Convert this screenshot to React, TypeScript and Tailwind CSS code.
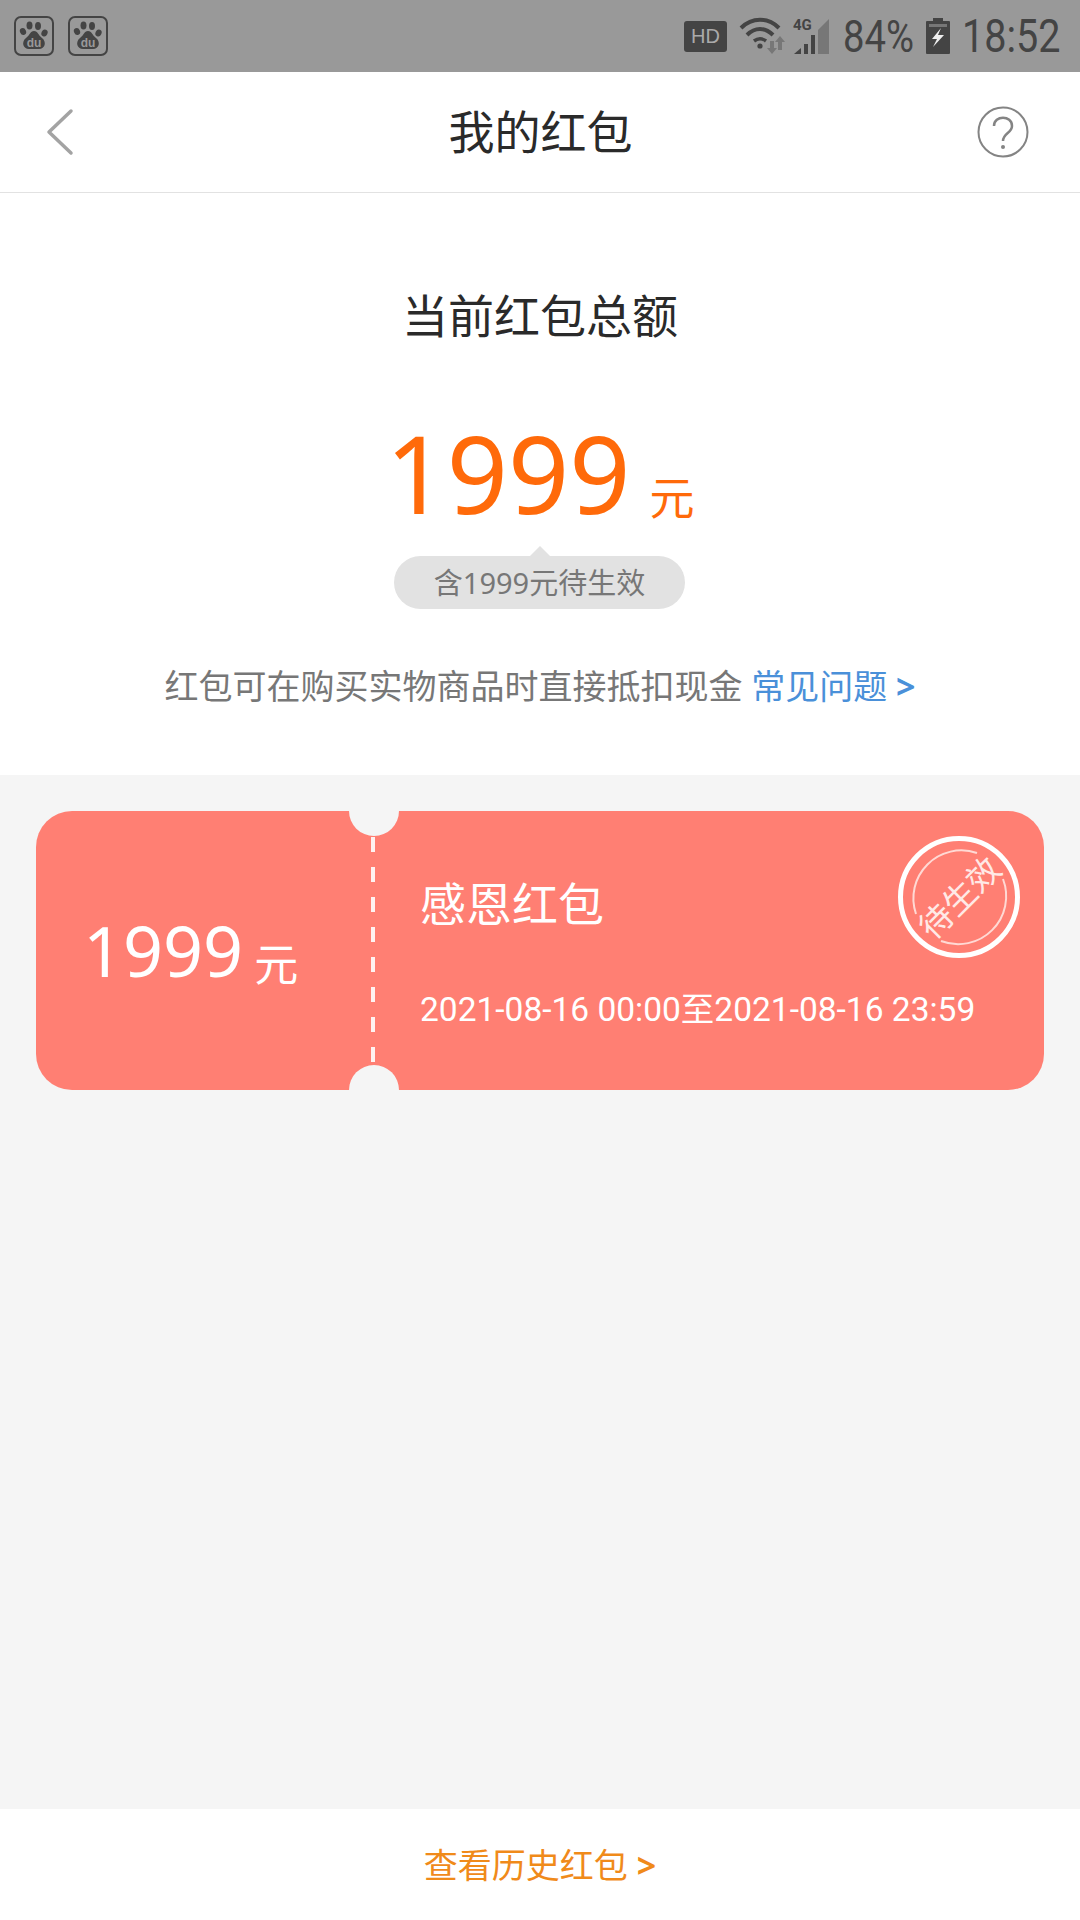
const cjk = "font-['Noto_Sans','Noto_Sans_CJK_SC',sans-serif]"

function PawIcon() {
  return (
    <div className="w-[40px] h-[40px] rounded-[7px] border-2 border-[#444] flex items-center justify-center">
      <svg width="32" height="32" viewBox="0 0 32 32">
        <ellipse cx="11.5" cy="5.5" rx="3" ry="4" fill="#444" />
        <ellipse cx="20" cy="6" rx="3" ry="4" fill="#444" />
        <ellipse cx="5" cy="11.5" rx="3" ry="3.6" fill="#444" transform="rotate(-25 5 11.5)" />
        <ellipse cx="26.5" cy="13" rx="3" ry="3.6" fill="#444" transform="rotate(25 26.5 13)" />
        <path d="M16 11 C20 11 20 15 24 18 C29 22 27 29 21 29 L11 29 C5 29 3 22 8 18 C12 15 12 11 16 11Z" fill="#444" />
        <text x="16" y="27" textAnchor="middle" fontSize="12" fontWeight="700" fill="#999" fontFamily="Liberation Sans, sans-serif">du</text>
      </svg>
    </div>
  )
}

function StatusBar() {
  return (
    <div className="h-[72px] bg-[#999999] flex items-center pl-[14px] pr-[20px] text-[#444]">
      <div className="flex gap-[14px]">
        <PawIcon />
        <PawIcon />
      </div>
      <div className="ml-auto flex items-center">
        <div className="w-[43px] h-[31px] bg-[#444] rounded-[3px] flex items-center justify-center text-[#aaa] text-[20px] font-['Liberation_Sans',sans-serif]">
          HD
        </div>
        <svg className="ml-[12px]" width="50" height="38" viewBox="0 0 50 38">
          <path d="M2 11 C13 0 29 0 40 11" fill="none" stroke="#444" strokeWidth="4" />
          <path d="M8 18 C16 10 26 10 34 18" fill="none" stroke="#444" strokeWidth="4" />
          <path d="M15 24 C19 21 23 21 27 24" fill="none" stroke="#444" strokeWidth="3.5" />
          <circle cx="21" cy="29" r="2.6" fill="#444" />
          <path d="M31 24 h4 v7 h3 l-5 6 l-5 -6 h3z" fill="#777" />
          <path d="M41 19 l5 6 h-3 v8 h-4 v-8 h-3z" fill="#777" />
        </svg>
        <svg className="ml-[4px]" width="38" height="38" viewBox="0 0 38 38">
          <text x="0" y="13" fontSize="15" fontWeight="700" fill="#444" fontFamily="Roboto, sans-serif">4G</text>
          <path d="M1 37 L8 31 V37Z" fill="#444" />
          <rect x="11" y="27" width="4" height="10" fill="#444" />
          <rect x="18" y="18" width="4" height="19" fill="#444" />
          <path d="M25 13 L36 2 V37 H25Z" fill="#777" />
        </svg>
        <span className="ml-[12px] text-[45px] leading-none font-['Roboto',sans-serif] inline-block w-[71px] origin-left scale-x-[0.85] whitespace-nowrap">84%</span>
        <svg className="ml-[12px]" width="24" height="36" viewBox="0 0 24 36">
          <path d="M7 0 H17 V3 H23 a1 1 0 0 1 1 1 V35 a1 1 0 0 1 -1 1 H1 a1 1 0 0 1 -1 -1 V4 a1 1 0 0 1 1 -1 H7Z" fill="#444" />
          <rect x="3" y="6" width="18" height="3" fill="#777" />
          <path d="M15 10 L6 21 H11 L7 29 L18 17 H12Z" fill="#eee" />
        </svg>
        <span className="ml-[12px] text-[46px] leading-none font-['Roboto',sans-serif] inline-block w-[98px] origin-left scale-x-[0.86] whitespace-nowrap">18:52</span>
      </div>
    </div>
  )
}

function NavBar() {
  return (
    <div className={`h-[121px] bg-white border-b border-[#e2e2e2] grid grid-cols-3 items-center pl-[46px] pr-[51px] ${cjk}`}>
      <svg width="28" height="48" viewBox="0 0 28 48">
        <path d="M25 3 L3 24 L25 45" fill="none" stroke="#a3a3a3" strokeWidth="3.5" strokeLinecap="round" strokeLinejoin="round" />
      </svg>
      <h1 className="text-[46px] leading-none text-[#2a2a2a] font-normal text-center whitespace-nowrap pl-[6px] -mt-[3px]">我的红包</h1>
      <svg className="justify-self-end" width="52" height="52" viewBox="0 0 52 52">
        <circle cx="26" cy="26" r="24.5" fill="none" stroke="#848484" strokeWidth="2" />
        <path d="M17 20 C17 9 35 9 35 20 C35 27 26 27 26 35" fill="none" stroke="#848484" strokeWidth="2.5" />
        <circle cx="26" cy="41" r="2" fill="#848484" />
      </svg>
    </div>
  )
}

function Summary() {
  return (
    <section className={`h-[582px] bg-white flex flex-col items-center ${cjk}`}>
      <h2 className="mt-[92px] text-[46px] leading-[60px] text-[#2a2a2a] font-normal">当前红包总额</h2>
      <div className="mt-[73px] h-[110px] flex items-end text-[#ff6a0a]">
        <span className="text-[107px] leading-[110px]">1999</span>
        <span className="ml-[19px] text-[45px] leading-[60px]">元</span>
      </div>
      <div className="mt-[28px] relative h-[53px] w-[291px] -ml-[1px] rounded-full bg-[#e2e2e2] flex items-center justify-center text-[29px] text-[#777]">
        <span className="absolute -top-[10px] left-1/2 -ml-[10px] w-0 h-0 border-x-[10px] border-x-transparent border-b-[10px] border-b-[#e2e2e2]" />
        含1999元待生效
      </div>
      <p className="mt-[52px] text-[34px] leading-[50px] text-[#777]">
        红包可在购买实物商品时直接抵扣现金 <span className="text-[#4a90d9]">常见问题 <b>&gt;</b></span>
      </p>
    </section>
  )
}

function Stamp() {
  return (
    <div className="absolute right-[24px] top-[25px] w-[122px] h-[122px] rounded-full border-[5px] border-white flex items-center justify-center">
      <svg className="absolute -inset-[5px]" width="122" height="122" viewBox="0 0 122 122">
        <path d="M79 17 A48 48 0 0 0 18 78" fill="none" stroke="#ffd9d4" strokeWidth="2" />
        <path d="M105 43 A48 48 0 0 1 43 105" fill="none" stroke="#ffd9d4" strokeWidth="2" />
      </svg>
      <span className="text-[33px] leading-none text-[#ffe9e6] -rotate-45 whitespace-nowrap">待生效</span>
    </div>
  )
}

function Coupon() {
  return (
    <div className={`relative mx-[36px] mt-[36px] h-[279px] rounded-[36px] bg-[#ff7f73] flex text-white overflow-hidden ${cjk}`}>
      <span className="absolute left-[313px] -top-[25px] w-[50px] h-[50px] rounded-full bg-[#f5f5f5]" />
      <span className="absolute left-[313px] -bottom-[25px] w-[50px] h-[50px] rounded-full bg-[#f5f5f5]" />
      <div className="w-[335px] shrink-0 pl-[47px] flex items-center pb-[2px]">
        <div className="flex items-end">
          <span className="text-[70px] leading-[84px]">1999</span>
          <span className="ml-[11px] text-[44px] leading-[56px]">元</span>
        </div>
      </div>
      <div className="w-[4px] my-[26px] bg-[repeating-linear-gradient(to_bottom,#ffffffe6_0,#ffffffe6_15px,transparent_15px,transparent_30px)]" />
      <div className="flex-1 pl-[45px] flex flex-col">
        <div className="mt-[62px] text-[46px] leading-[60px]">感恩红包</div>
        <div className="mt-[55px] text-[33.5px] leading-[44px] whitespace-nowrap font-['Roboto','Noto_Sans_CJK_SC',sans-serif]">2021-08-16 00:00至2021-08-16 23:59</div>
      </div>
      <Stamp />
    </div>
  )
}

export default function App() {
  return (
    <div className="w-[1080px] h-[1920px] bg-[#f5f5f5] flex flex-col">
      <StatusBar />
      <NavBar />
      <Summary />
      <Coupon />
      <div className={`mt-auto h-[111px] bg-white flex items-center justify-center text-[34px] text-[#f08a1a] pt-[2px] ${cjk}`}>
        <span>查看历史红包 <b>&gt;</b></span>
      </div>
    </div>
  )
}
